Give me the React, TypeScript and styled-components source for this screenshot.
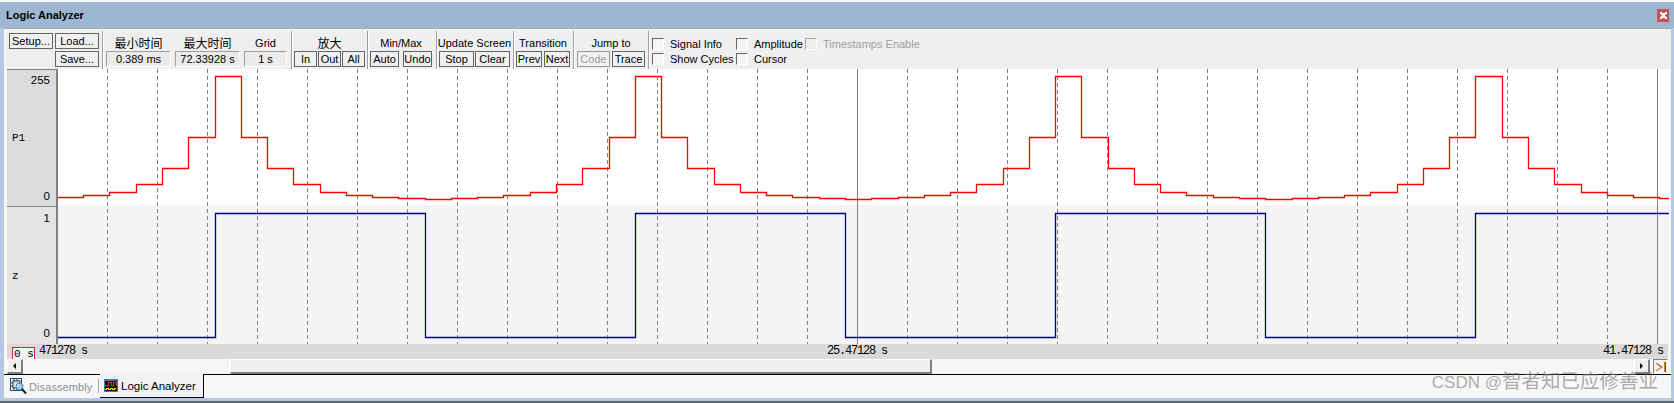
import styled, { createGlobalStyle } from "styled-components";

const GlobalStyle = createGlobalStyle`
  html, body {
    margin: 0;
    padding: 0;
    background: #b3cae2;
    overflow: hidden;
  }
  * {
    box-sizing: border-box;
  }
`;

const PLOT_LEFT = 58;
const PLOT_TOP = 69;
const PLOT_WIDTH = 1611;
const PLOT_HEIGHT = 275;
const FIRST_EDGE = 214.5;
const STEP = 26.27;
const LEVELS = [76, 137, 168, 184, 192, 195, 197, 198, 199, 198, 197, 195, 192, 184, 168, 137];

const px = (v: number) => Math.round(v) + 0.5;

function buildP1Path() {
  let d = `M0 ${px(197 - PLOT_TOP)}`;
  for (let i = -5; i <= 55; i++) {
    const x = px(FIRST_EDGE + STEP * i - PLOT_LEFT);
    const y = px(LEVELS[((i % 16) + 16) % 16] - PLOT_TOP);
    d += ` H${x} V${y}`;
  }
  return d + ` H${PLOT_WIDTH}`;
}

function buildZPath() {
  const high = px(213 - PLOT_TOP);
  const low = px(337 - PLOT_TOP);
  let d = `M0 ${low}`;
  for (let i = 0; i <= 6; i++) {
    const x = px(FIRST_EDGE + STEP * 8 * i - PLOT_LEFT);
    d += ` H${x} V${i % 2 === 0 ? high : low}`;
  }
  return d + ` H${PLOT_WIDTH}`;
}

const gridLines = Array.from({ length: 32 }, (_, i) => 107 + i * 50);

function WavePlot() {
  return (
    <svg width={PLOT_WIDTH} height={PLOT_HEIGHT} viewBox={`0 0 ${PLOT_WIDTH} ${PLOT_HEIGHT}`} style={{ display: "block" }}>
      <rect x="0" y="0" width={PLOT_WIDTH} height="136" fill="#ffffff" />
      <rect x="0" y="136" width={PLOT_WIDTH} height="139" fill="#f4f4f4" />
      {gridLines.map((x) => {
        const solid = x === 857 || x === 1657;
        return (
          <line
            key={x}
            x1={x - PLOT_LEFT + 0.5}
            x2={x - PLOT_LEFT + 0.5}
            y1="0"
            y2={PLOT_HEIGHT}
            stroke="#808080"
            strokeWidth={1}
            strokeDasharray={solid ? undefined : "4 3"}
            shapeRendering="crispEdges"
          />
        );
      })}
      <path d={buildP1Path()} fill="none" stroke="#ff0000" strokeWidth={1.3} strokeLinecap="square" />
      <path d={buildZPath()} fill="none" stroke="#000080" strokeWidth={1.3} strokeLinecap="square" />
    </svg>
  );
}

function DisassemblyIcon() {
  return (
    <svg width="17" height="17" viewBox="0 0 17 17">
      <rect x="0.5" y="0.5" width="11" height="12" fill="#fff" stroke="#1c4f86" />
      <rect x="3" y="3" width="7" height="7" fill="#dfe6ee" stroke="#333" />
      <path d="M4 1v2M7 1v2M4 10v2M7 10v2M1 5h2M1 8h2" stroke="#333" />
      <circle cx="9.5" cy="8.5" r="3.5" fill="#bfe0f5" fillOpacity=".7" stroke="#2a7fb8" />
      <path d="M12 11l4 4.5" stroke="#222" strokeWidth="2" />
    </svg>
  );
}

function AnalyzerIcon() {
  return (
    <svg width="14" height="13" viewBox="0 0 14 13" shapeRendering="crispEdges">
      <rect x="0" y="0" width="14" height="13" fill="#4a73b8" />
      <rect x="1" y="2" width="12" height="10" fill="#111" />
      <path d="M1 6.5h3V3.5h3v3h2V3.5h3v3" fill="none" stroke="#ff2020" />
      <path d="M1 10.5h1v-1h2v1h2v-1h2v1h2v-1h2" fill="none" stroke="#ffe000" />
    </svg>
  );
}

function GoEndIcon() {
  return (
    <svg width="12" height="12" viewBox="0 0 12 12" shapeRendering="crispEdges">
      <path d="M1 2l6 4-6 4" fill="none" stroke="#d97a1c" strokeWidth="1.2" shapeRendering="auto" />
      <path d="M2 3l4 3" fill="none" stroke="#2a4fa0" strokeWidth=".6" shapeRendering="auto" />
      <rect x="9" y="1" width="1" height="10" fill="#d97a1c" />
      <rect x="10" y="1" width="1" height="10" fill="#2a4fa0" />
    </svg>
  );
}

export default function App() {
  return (
    <Screen>
      <GlobalStyle />
      <TitleBar>
        <TitleText>Logic Analyzer</TitleText>
        <CloseButton>
          <svg width="7" height="7" viewBox="0 0 7 7" shapeRendering="crispEdges">
            <path d="M0 0h2v1h3V0h2v2H6v1H5v1h1v1h1v2H5V6H2v1H0V5h1V4h1V3H1V2H0z" fill="#fff" />
          </svg>
        </CloseButton>
      </TitleBar>

      <Client>
        <Toolbar>
          <FileGroup>
            <ToolButton $w={44}>Setup...</ToolButton>
            <ToolButton $w={44}>Load...</ToolButton>
            <span />
            <ToolButton $w={44}>Save...</ToolButton>
          </FileGroup>
          <Separator $before={3} $after={2} />

          <Group $gap={4}>
            <Field>
              <GroupLabel $cjk>最小时间</GroupLabel>
              <Display $w={65}>0.389 ms</Display>
            </Field>
            <Field>
              <GroupLabel $cjk>最大时间</GroupLabel>
              <Display $w={65}>72.33928 s</Display>
            </Field>
            <Field>
              <GroupLabel>Grid</GroupLabel>
              <Display $w={43}>1 s</Display>
            </Field>
          </Group>
          <Separator $before={4} $after={1} />

          <Field>
            <GroupLabel $cjk>放大</GroupLabel>
            <ButtonRow $gap={1}>
              <ToolButton $w={23}>In</ToolButton>
              <ToolButton $w={23}>Out</ToolButton>
              <ToolButton $w={23}>All</ToolButton>
            </ButtonRow>
          </Field>
          <Separator $before={2} $after={1} />

          <Field>
            <GroupLabel>Min/Max</GroupLabel>
            <ButtonRow $gap={4}>
              <ToolButton $w={29}>Auto</ToolButton>
              <ToolButton $w={29}>Undo</ToolButton>
            </ButtonRow>
          </Field>
          <Separator $before={4} $after={1} />

          <Field>
            <GroupLabel>Update Screen</GroupLabel>
            <ButtonRow $gap={1}>
              <ToolButton $w={35}>Stop</ToolButton>
              <ToolButton $w={35}>Clear</ToolButton>
            </ButtonRow>
          </Field>
          <Separator $before={3} $after={1} />

          <Field>
            <GroupLabel>Transition</GroupLabel>
            <ButtonRow $gap={2}>
              <ToolButton $w={26}>Prev</ToolButton>
              <ToolButton $w={26}>Next</ToolButton>
            </ButtonRow>
          </Field>
          <Separator $before={3} $after={2} />

          <Field>
            <GroupLabel>Jump to</GroupLabel>
            <ButtonRow $gap={2}>
              <ToolButton $w={33} $disabled>Code</ToolButton>
              <ToolButton $w={33}>Trace</ToolButton>
            </ButtonRow>
          </Field>
          <Separator $before={3} $after={2} />

          <Checks>
            <CheckItem><CheckBox />Signal Info</CheckItem>
            <CheckItem><CheckBox />Amplitude</CheckItem>
            <CheckItem $disabled><CheckBox $disabled />Timestamps Enable</CheckItem>
            <CheckItem><CheckBox />Show Cycles</CheckItem>
            <CheckItem><CheckBox />Cursor</CheckItem>
          </Checks>
        </Toolbar>

        <PlotArea>
          <SignalColumn>
            <SignalRow $h={137} $shade="#dcdcdc" $top={3} $bottom={3}>
              <Scale>255</Scale>
              <SignalName>P1</SignalName>
              <Scale>0</Scale>
            </SignalRow>
            <SignalRow $h={138} $shade="#e4e4e4" $top={4} $bottom={4}>
              <Scale>1</Scale>
              <SignalName>z</SignalName>
              <Scale>0</Scale>
            </SignalRow>
          </SignalColumn>
          <WavePlot />
        </PlotArea>

        <TimeBar>
          <TimeStart>
            <TimeOrigin>0 s</TimeOrigin>
            <TimeText>471278 s</TimeText>
          </TimeStart>
          <TimeText>25.47128 s</TimeText>
          <TimeText>41.47128 s</TimeText>
        </TimeBar>

        <ScrollBar>
          <ScrollButton><ArrowLeft /></ScrollButton>
          <ScrollTrack $w={207} />
          <ScrollThumb />
          <ScrollTrack $grow />
          <ScrollButton><ArrowRight /></ScrollButton>
          <EndButton><GoEndIcon /></EndButton>
        </ScrollBar>
      </Client>

      <TabStrip>
        <Tab>
          <DisassemblyIcon />
          Disassembly
        </Tab>
        <TabDivider />
        <ActiveTab>
          <AnalyzerIcon />
          Logic Analyzer
        </ActiveTab>
      </TabStrip>
      <BottomEdge />

      <Watermark>
        <WatermarkLatin>CSDN @</WatermarkLatin>智者知已应修善业
      </Watermark>
    </Screen>
  );
}

const Screen = styled.div`
  position: relative;
  width: 1674px;
  height: 403px;
  overflow: hidden;
  display: flex;
  flex-direction: column;
  border-top: 2px solid #f4f8fc;
  background: #b3cae2;
  font-family: "Liberation Sans", Arial, "Noto Sans CJK SC", sans-serif;
  font-size: 11px;
  color: #000;
`;

const TitleBar = styled.div`
  flex: none;
  height: 26px;
  display: flex;
  align-items: center;
  justify-content: space-between;
  padding: 0 5px 0 6px;
  background: #9db6d1;
`;

const TitleText = styled.span`
  font-size: 11px;
  font-weight: 700;
`;

const CloseButton = styled.div`
  width: 12px;
  height: 13px;
  display: flex;
  align-items: center;
  justify-content: center;
  background: #c75050;
`;

const Client = styled.div`
  flex: none;
  width: 1667px;
  margin-left: 4px;
  padding: 0 0 0 2px;
  background: #f7f7f7;
  border-top: 1px solid #b0ada5;
`;

const Toolbar = styled.div`
  height: 40px;
  display: flex;
  padding-left: 3px;
  background: #efefef;
`;

const FileGroup = styled.div`
  display: grid;
  grid-template-columns: 44px 44px;
  grid-template-rows: 16px 16px;
  gap: 2px;
  padding-top: 4px;
`;

const Group = styled.div<{ $gap: number }>`
  display: flex;
  gap: ${(p) => p.$gap}px;
`;

const Field = styled.div`
  display: flex;
  flex-direction: column;
`;

const GroupLabel = styled.div<{ $cjk?: boolean }>`
  width: 0;
  min-width: 100%;
  height: 22px;
  padding-top: ${(p) => (p.$cjk ? 8 : 7)}px;
  line-height: 14px;
  display: flex;
  justify-content: center;
  white-space: nowrap;
  font-size: ${(p) => (p.$cjk ? 12 : 11)}px;
`;

const ButtonRow = styled.div<{ $gap: number }>`
  display: flex;
  gap: ${(p) => p.$gap}px;
`;

const ToolButton = styled.div<{ $w: number; $disabled?: boolean }>`
  width: ${(p) => p.$w}px;
  height: 16px;
  line-height: 14px;
  text-align: center;
  white-space: nowrap;
  overflow: hidden;
  background: #f0f0f0;
  border: 1px solid ${(p) => (p.$disabled ? "#9a9a9a" : "#646464")};
  color: ${(p) => (p.$disabled ? "#a0a0a0" : "#000")};
`;

const Display = styled.div<{ $w: number }>`
  width: ${(p) => p.$w}px;
  height: 16px;
  line-height: 14px;
  text-align: center;
  white-space: nowrap;
  background: #ebebeb;
  border: 1px solid;
  border-color: #a0a0a0 #fff #fff #a0a0a0;
`;

const Separator = styled.div<{ $before: number; $after: number }>`
  width: 2px;
  height: 38px;
  margin: 2px ${(p) => p.$after}px 0 ${(p) => p.$before}px;
  border-left: 1px solid #a0a0a0;
  border-right: 1px solid #fff;
`;

const Checks = styled.div`
  display: grid;
  grid-template-columns: 84px 69px auto;
  grid-template-rows: 12px 12px;
  row-gap: 3px;
  padding-top: 9px;
`;

const CheckItem = styled.label<{ $disabled?: boolean }>`
  display: flex;
  align-items: center;
  gap: 6px;
  white-space: nowrap;
  line-height: 12px;
  color: ${(p) => (p.$disabled ? "#a0a0a0" : "#000")};
`;

const CheckBox = styled.span<{ $disabled?: boolean }>`
  flex: none;
  width: 12px;
  height: 12px;
  background: ${(p) => (p.$disabled ? "#efefef" : "#f6f6f6")};
  border: 1px solid;
  border-color: ${(p) => (p.$disabled ? "#a8a8a8 #fff #fff #a8a8a8" : "#666 #fff #fff #666")};
`;

const PlotArea = styled.div`
  display: flex;
  height: 275px;
  margin-left: 1px;
`;

const SignalColumn = styled.div`
  flex: none;
  width: 51px;
  border-right: 2px solid #808080;
`;

const SignalRow = styled.div<{ $h: number; $shade: string; $top: number; $bottom: number }>`
  height: ${(p) => p.$h}px;
  display: flex;
  flex-direction: column;
  justify-content: space-between;
  padding: ${(p) => p.$top}px 6px ${(p) => p.$bottom}px 0;
  background: ${(p) => p.$shade};
  border-top: 1px solid #808080;
`;

const Scale = styled.div`
  height: 14px;
  line-height: 14px;
  text-align: right;
  font-size: 11.5px;
`;

const SignalName = styled.div`
  padding-left: 5px;
  font-family: "Liberation Mono", "Courier New", monospace;
  font-size: 11px;
  line-height: 14px;
`;

const TimeBar = styled.div`
  height: 15px;
  margin-left: 1px;
  width: 1661px;
  display: grid;
  grid-template-columns: 820px 776px auto;
  background: #dadada;
`;

const TimeStart = styled.div`
  display: flex;
  padding-left: 5px;
`;

const TimeOrigin = styled.div`
  flex: none;
  width: 23px;
  height: 12px;
  margin: 3px 4px 0 0;
  line-height: 12px;
  padding-left: 1px;
  white-space: nowrap;
  background: #f2f2f2;
  border: 1px solid #c03030;
  border-bottom: none;
  font-family: "Liberation Mono", "Courier New", monospace;
  font-size: 11px;
`;

const TimeText = styled.div`
  font-family: "Liberation Mono", "Courier New", monospace;
  font-size: 12px;
  letter-spacing: -1.2px;
  line-height: 15px;
  white-space: nowrap;
`;

const ScrollBar = styled.div`
  height: 15px;
  margin-left: 1px;
  width: 1661px;
  display: flex;
`;

const ScrollButton = styled.div`
  flex: none;
  width: 16px;
  height: 15px;
  display: flex;
  align-items: center;
  justify-content: center;
  background: #efefef;
  border: 1px solid;
  border-color: #fff #808080 #808080 #fff;
  border-right-width: 2px;
  border-bottom-width: 2px;
`;

const ScrollTrack = styled.div<{ $w?: number; $grow?: boolean }>`
  flex: ${(p) => (p.$grow ? "1" : "none")};
  width: ${(p) => (p.$w ? `${p.$w}px` : "auto")};
  background: repeating-conic-gradient(#ffffff 0 25%, #ededed 0 50%) 0 0 / 2px 2px;
`;

const ScrollThumb = styled.div`
  flex: none;
  width: 702px;
  background: #efefef;
  border: 1px solid;
  border-color: #fff #808080 #808080 #fff;
  border-right-width: 2px;
  border-bottom-width: 2px;
`;

const ArrowLeft = styled.span`
  width: 0;
  height: 0;
  border-style: solid;
  border-width: 3px 3px 3px 0;
  border-color: transparent #000 transparent transparent;
`;

const ArrowRight = styled.span`
  width: 0;
  height: 0;
  border-style: solid;
  border-width: 3px 0 3px 3px;
  border-color: transparent transparent transparent #000;
`;

const EndButton = styled.div`
  flex: none;
  width: 15px;
  height: 15px;
  margin-left: 3px;
  display: flex;
  align-items: center;
  justify-content: center;
  border: 1px solid;
  border-color: #808080 #fff #fff #808080;
  background: #f4f4f4;
`;

const TabStrip = styled.div`
  flex: none;
  width: 1667px;
  height: 24px;
  margin-left: 4px;
  display: flex;
  align-items: stretch;
  background: #f7f7f7;
  border-top: 1px solid #000;
`;

const Tab = styled.div`
  width: 94px;
  display: flex;
  align-items: center;
  gap: 2px;
  padding-left: 6px;
  font-size: 11px;
  letter-spacing: 0.1px;
  color: #8a9096;
`;

const TabDivider = styled.div`
  width: 1px;
  height: 14px;
  margin: 4px 1px 0 0;
  background: #a8a8a8;
`;

const ActiveTab = styled.div`
  width: 104px;
  margin-top: -1px;
  display: flex;
  align-items: center;
  gap: 3px;
  padding-left: 4px;
  font-size: 11.5px;
  background: #f2f2f2;
  border-right: 1px solid #000;
  border-bottom: 1px solid #000;
`;

const BottomEdge = styled.div`
  flex: 1;
  border-bottom: 2px solid #666;
`;

const Watermark = styled.div`
  position: absolute;
  right: 16px;
  bottom: 8px;
  font-size: 19.5px;
  line-height: 24px;
  white-space: nowrap;
  color: rgba(120, 120, 120, 0.62);
  font-family: "Liberation Sans", "Noto Sans CJK SC", sans-serif;
`;

const WatermarkLatin = styled.span`
  font-size: 17px;
`;
